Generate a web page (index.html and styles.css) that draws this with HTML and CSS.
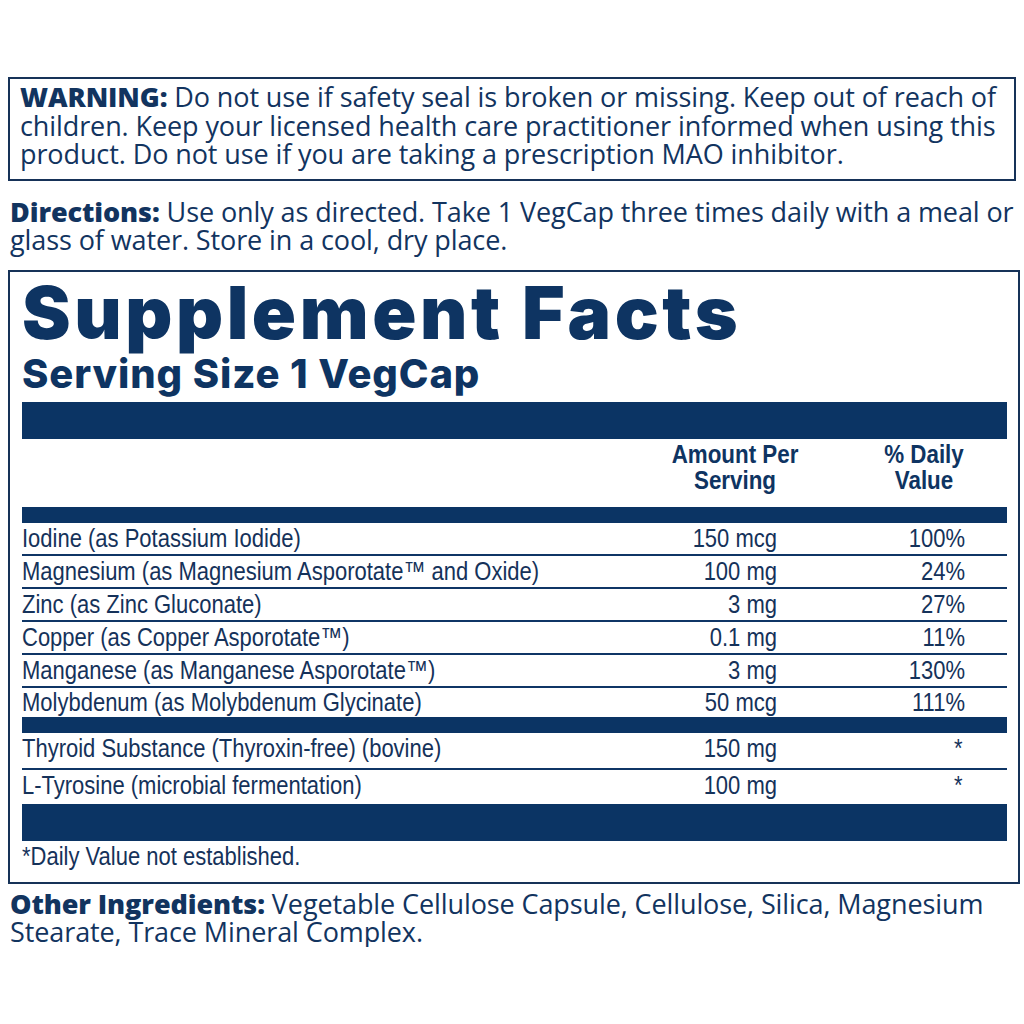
FILE: index.html
```html
<!DOCTYPE html>
<html>
<head>
<meta charset="utf-8">
<link rel="stylesheet" href="styles.css">
</head>
<body>
<div class="page">
  <div class="warning">
    <p><b>WARNING:</b> Do not use if safety seal is broken or missing. Keep out of reach of children. Keep your licensed health care practitioner informed when using this product. Do not use if you are taking a prescription MAO inhibitor.</p>
  </div>
  <p class="directions"><b>Directions:</b> Use only as directed. Take 1 VegCap three times daily with a meal or glass of water. Store in a cool, dry place.</p>
  <div class="facts">
    <h1 class="title">Supplement Facts</h1>
    <h2 class="serving">Serving Size 1 VegCap</h2>
    <div class="bar thick"></div>
    <div class="head">
      <span></span>
      <span class="hcol">Amount Per<br>Serving</span>
      <span class="hcol">% Daily<br>Value</span>
    </div>
    <div class="bar mid"></div>
    <div class="row line"><span class="name">Iodine (as Potassium Iodide)</span><span class="num">150 mcg</span><span class="num">100%</span></div>
    <div class="row line"><span class="name">Magnesium (as Magnesium Asporotate™ and Oxide)</span><span class="num">100 mg</span><span class="num">24%</span></div>
    <div class="row line"><span class="name">Zinc (as Zinc Gluconate)</span><span class="num">3 mg</span><span class="num">27%</span></div>
    <div class="row line"><span class="name">Copper (as Copper Asporotate™)</span><span class="num">0.1 mg</span><span class="num">11%</span></div>
    <div class="row line"><span class="name">Manganese (as Manganese Asporotate™)</span><span class="num">3 mg</span><span class="num">130%</span></div>
    <div class="row short"><span class="name">Molybdenum (as Molybdenum Glycinate)</span><span class="num">50 mcg</span><span class="num">111%</span></div>
    <div class="bar mid"></div>
    <div class="row line tall"><span class="name">Thyroid Substance (Thyroxin-free) (bovine)</span><span class="num">150 mg</span><span class="num star">*</span></div>
    <div class="row tall2"><span class="name">L-Tyrosine (microbial fermentation)</span><span class="num">100 mg</span><span class="num star">*</span></div>
    <div class="bar thick"></div>
    <p class="foot"><span class="name">*Daily Value not established.</span></p>
  </div>
  <p class="other"><b>Other Ingredients:</b> Vegetable Cellulose Capsule, Cellulose, Silica, Magnesium Stearate, Trace Mineral Complex.</p>
</div>
</body>
</html>
```
FILE: styles.css
```css
html, body {
  margin: 0;
  padding: 0;
  background: #ffffff;
}
body {
  color: #12345f;
  font-family: "Open Sans", "Noto Sans", sans-serif;
}
.page {
  padding-top: 77px;
  padding-left: 8px;
  width: 1012px;
}
.warning {
  width: 1008px;
  border: 2px solid #163258;
  box-sizing: border-box;
  padding: 4px 2px 10px 10px;
}
.warning p, .directions, .other {
  margin: 0;
  font-size: 27px;
  line-height: 28.5px;
  letter-spacing: -0.1px;
}
b {
  font-weight: 800;
}
.directions {
  margin: 17px -6px 15px 2px;
}
.facts {
  border: 2px solid #163258;
  padding: 3px 11px 11px 12px;
}
.title {
  margin: 0;
  font-family: "Inter", "Liberation Sans", sans-serif;
  font-weight: 900;
  font-size: 73px;
  line-height: 76px;
  letter-spacing: 3.6px;
  color: #0e3462;
  white-space: nowrap;
}
.serving {
  margin: 2px 0 0 0;
  font-family: "Inter", "Liberation Sans", sans-serif;
  font-weight: 800;
  font-size: 40px;
  line-height: 42px;
  letter-spacing: 0.9px;
  color: #0e3462;
  white-space: nowrap;
}
.bar {
  background: #0b3464;
}
.bar.thick { height: 37px; }
.bar.mid { height: 16px; }
.serving + .bar { margin-top: 7px; }
.head {
  display: grid;
  grid-template-columns: minmax(0, 1fr) 160px 140px;
  column-gap: 39px;
  padding: 2px 13px 0 0;
  height: 68px;
  box-sizing: border-box;
}
.hcol {
  text-align: center;
  font-family: "Liberation Sans", sans-serif;
  font-weight: 700;
  font-size: 26px;
  line-height: 26px;
  color: #0e3462;
  transform: scaleX(0.86);
  white-space: nowrap;
}
.row {
  display: grid;
  grid-template-columns: minmax(0, 1fr) 160px 188px;
  padding-right: 42px;
  font-family: "Liberation Sans", sans-serif;
  font-size: 26.5px;
  line-height: 31px;
  color: #15325a;
  white-space: nowrap;
}
.row.line {
  border-bottom: 2px solid #0f3565;
}
.row.short { line-height: 29px; }
.row.tall { padding-bottom: 4px; }
.row.tall2 { padding-bottom: 3px; }
.name {
  display: block;
  min-width: 0;
  transform: scaleX(0.83);
  transform-origin: left center;
}
.num {
  display: block;
  text-align: right;
  transform: scaleX(0.83);
  transform-origin: right center;
}
.star {
  padding-right: 3px;
}
.foot {
  margin: 0;
  font-family: "Liberation Sans", sans-serif;
  font-size: 26.5px;
  line-height: 30px;
  color: #15325a;
  white-space: nowrap;
}
.other {
  margin: 6px 0 0 2px;
}
```
